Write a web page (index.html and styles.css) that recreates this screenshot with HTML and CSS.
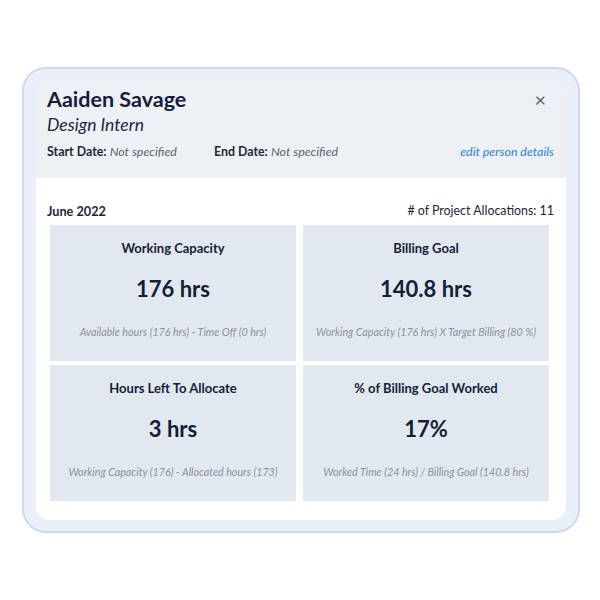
FILE: index.html
```html
<!DOCTYPE html>
<html lang="en">
<head>
    <meta charset="UTF-8">
    <title>Person Capacity</title>
    <link rel="stylesheet" href="styles.css">
</head>
<body>
    <div class="frame">
        <div class="card">
            <div class="card-head">
                <div class="name-row">
                    <h1 class="name">Aaiden Savage</h1>
                    <span class="close">&times;</span>
                </div>
                <div class="role">Design Intern</div>
                <div class="dates">
                    <span class="date"><strong>Start Date:</strong> <em>Not specified</em></span>
                    <span class="date"><strong>End Date:</strong> <em>Not specified</em></span>
                    <a class="edit-link" href="#">edit person details</a>
                </div>
            </div>

            <div class="card-body">
                <div class="period-row">
                    <span class="period">June 2022</span>
                    <span class="alloc"># of Project Allocations: 11</span>
                </div>
                <div class="stats">
                    <div class="stat">
                        <div class="stat-title">Working Capacity</div>
                        <div class="stat-value">176 hrs</div>
                        <div class="stat-note">Available hours (176 hrs) - Time Off (0 hrs)</div>
                    </div>
                    <div class="stat">
                        <div class="stat-title">Billing Goal</div>
                        <div class="stat-value">140.8 hrs</div>
                        <div class="stat-note">Working Capacity (176 hrs) X Target Billing (80 %)</div>
                    </div>
                    <div class="stat">
                        <div class="stat-title">Hours Left To Allocate</div>
                        <div class="stat-value">3 hrs</div>
                        <div class="stat-note">Working Capacity (176) - Allocated hours (173)</div>
                    </div>
                    <div class="stat">
                        <div class="stat-title">% of Billing Goal Worked</div>
                        <div class="stat-value">17%</div>
                        <div class="stat-note">Worked Time (24 hrs) / Billing Goal (140.8 hrs)</div>
                    </div>
                </div>
            </div>
        </div>
    </div>
</body>
</html>
```

FILE: styles.css
```css
body {
    font-family: Lato, "Open Sans", sans-serif;
    background-color: #fff;
    color: #16223b;
    margin: 0;
    padding: 67px 0 0 22px;
}

.frame {
    box-sizing: border-box;
    width: 558px;
    height: 466px;
    padding: 11px 12px;
    background-color: #e9f0fa;
    border: 2px solid #ccdaee;
    border-radius: 24px;
}

.card {
    height: 100%;
    background: #fff;
    border-radius: 14px;
    overflow: hidden;
}

.card-head {
    box-sizing: border-box;
    height: 98px;
    padding: 5px 11px 0 11px;
    background-color: #edf1f5;
}

.name-row {
    display: flex;
    justify-content: space-between;
    align-items: flex-start;
}

.name {
    margin: 0;
    font-size: 21.5px;
    line-height: 28px;
    font-weight: 700;
    color: #14203b;
}

.close {
    margin: 4px 9px 0 0;
    font-size: 20px;
    line-height: 20px;
    color: #5b6371;
}

.role {
    margin-top: 0;
    font-size: 17.5px;
    line-height: 24px;
    font-style: italic;
    color: #1b2640;
}

.dates {
    display: flex;
    align-items: baseline;
    margin-top: 5px;
    font-size: 12.4px;
    line-height: 20px;
}

.date {
    margin-right: 37px;
}

.date strong {
    color: #1d2838;
}

.date em {
    color: #5a616b;
}

.edit-link {
    margin-left: auto;
    margin-right: 1px;
    font-style: italic;
    color: #2c80d3;
    text-decoration: none;
}

.card-body {
    padding: 24px 12px 0 11px;
}

.period-row {
    display: flex;
    justify-content: space-between;
    font-size: 12.4px;
    line-height: 18px;
    color: #1b2538;
}

.period {
    font-weight: 700;
    font-size: 12.7px;
}

.stats {
    display: grid;
    grid-template-columns: 246px 246px;
    grid-auto-rows: 136px;
    column-gap: 7px;
    row-gap: 4px;
    margin: 5px 3px 0 3px;
}

.stat {
    padding-top: 13px;
    background-color: #e2e8f0;
    text-align: center;
}

.stat-title {
    font-size: 13px;
    line-height: 20px;
    font-weight: 700;
    color: #16213a;
}

.stat-value {
    margin-top: 17px;
    font-size: 22px;
    line-height: 28px;
    font-weight: 700;
    color: #131e37;
}

.stat-note {
    margin-top: 21px;
    font-size: 10.7px;
    line-height: 16px;
    font-style: italic;
    color: #8a93a0;
}
```
